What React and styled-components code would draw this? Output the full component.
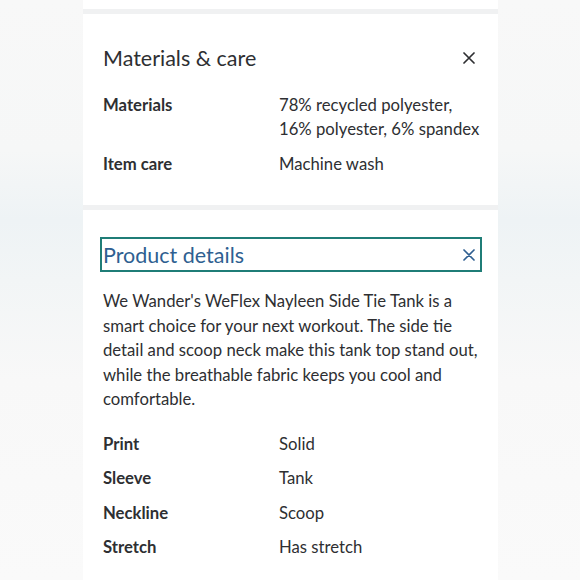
import React from 'react';
import styled, { createGlobalStyle } from 'styled-components';

const GlobalStyle = createGlobalStyle`
  html, body {
    margin: 0;
    padding: 0;
  }
  body {
    width: 580px;
    height: 580px;
    overflow: hidden;
    font-family: Lato, "Open Sans", sans-serif;
    color: #2e2f32;
    background:
      linear-gradient(180deg,
        #f8f8f8 0px,
        #f6f7f7 150px,
        #eef3f5 220px,
        #f2f5f6 280px,
        #f8f8f8 380px,
        #fafafa 580px);
  }
`;

const materials = [
  { label: 'Materials', value: ['78% recycled polyester,', '16% polyester, 6% spandex'] },
  { label: 'Item care', value: ['Machine wash'] },
];

const details = [
  { label: 'Print', value: 'Solid' },
  { label: 'Sleeve', value: 'Tank' },
  { label: 'Neckline', value: 'Scoop' },
  { label: 'Stretch', value: 'Has stretch' },
];

const CloseIcon = ({ color }) => (
  <svg width="12" height="12" viewBox="0 0 12 12">
    <path d="M1 1 L11 11 M11 1 L1 11" stroke={color} strokeWidth="1.7" strokeLinecap="round" />
  </svg>
);

const App = () => (
  <>
    <GlobalStyle />
    <Column>
      <TopStub />
      <Gap />
      <Section $padTop={30} $padBottom={29}>
        <Header>
          <Title>Materials &amp; care</Title>
          <CloseIcon color="#2e2f32" />
        </Header>
        <SpecList>
          {materials.map((row) => (
            <SpecRow key={row.label}>
              <Label>{row.label}</Label>
              <Value>
                {row.value.map((line) => (
                  <div key={line}>{line}</div>
                ))}
              </Value>
            </SpecRow>
          ))}
        </SpecList>
      </Section>
      <Gap />
      <Section $padTop={27} $padBottom={22}>
        <FocusHeader>
          <Title $accent>Product details</Title>
          <CloseIcon color="#2f5f91" />
        </FocusHeader>
        <Description>
          We Wander&apos;s WeFlex Nayleen Side Tie Tank is a smart choice for your
          next workout. The side tie detail and scoop neck make this tank top
          stand out, while the breathable fabric keeps you cool and comfortable.
        </Description>
        <DetailList>
          {details.map((row) => (
            <SpecRow key={row.label}>
              <Label>{row.label}</Label>
              <Value>{row.value}</Value>
            </SpecRow>
          ))}
        </DetailList>
      </Section>
    </Column>
  </>
);

export default App;

const Column = styled.div`
  width: 415px;
  margin-left: 83px;
  min-height: 580px;
  display: flex;
  flex-direction: column;
  background: #ffffff;
`;

const TopStub = styled.div`
  flex-shrink: 0;
  height: 9px;
  background: #ffffff;
`;

const Gap = styled.div`
  flex-shrink: 0;
  height: 5px;
  background: #f0f1f2;
`;

const Section = styled.section`
  flex-shrink: 0;
  display: flex;
  flex-direction: column;
  padding: ${({ $padTop }) => $padTop}px 16px ${({ $padBottom }) => $padBottom}px 20px;
  background: #ffffff;
`;

const Header = styled.div`
  display: flex;
  align-items: center;
  justify-content: space-between;
  height: 28px;
  padding: 0 7px 0 0;
`;

const FocusHeader = styled(Header)`
  box-sizing: border-box;
  height: 35px;
  margin: 0 0 0 -3px;
  padding: 0 5px 0 1px;
  border: 2px solid #1f7d77;
`;

const Title = styled.h2`
  margin: 0;
  font-size: 21.5px;
  font-weight: 400;
  color: ${({ $accent }) => ($accent ? '#2f5f91' : '#2e2f32')};
`;

const SpecList = styled.div`
  display: flex;
  flex-direction: column;
  gap: 11px;
  margin-top: 21px;
`;

const SpecRow = styled.div`
  display: grid;
  grid-template-columns: 176px 1fr;
  font-size: 16.7px;
  line-height: 24px;
`;

const Label = styled.div`
  font-weight: 700;
  color: #2e2f32;
`;

const Value = styled.div`
  font-weight: 400;
  color: #2e2f32;
`;

const Description = styled.p`
  margin: 17px 4px 0 0;
  font-size: 16.7px;
  line-height: 24.5px;
  color: #2e2f32;
`;

const DetailList = styled.div`
  display: flex;
  flex-direction: column;
  gap: 10.5px;
  margin-top: 20px;
`;
